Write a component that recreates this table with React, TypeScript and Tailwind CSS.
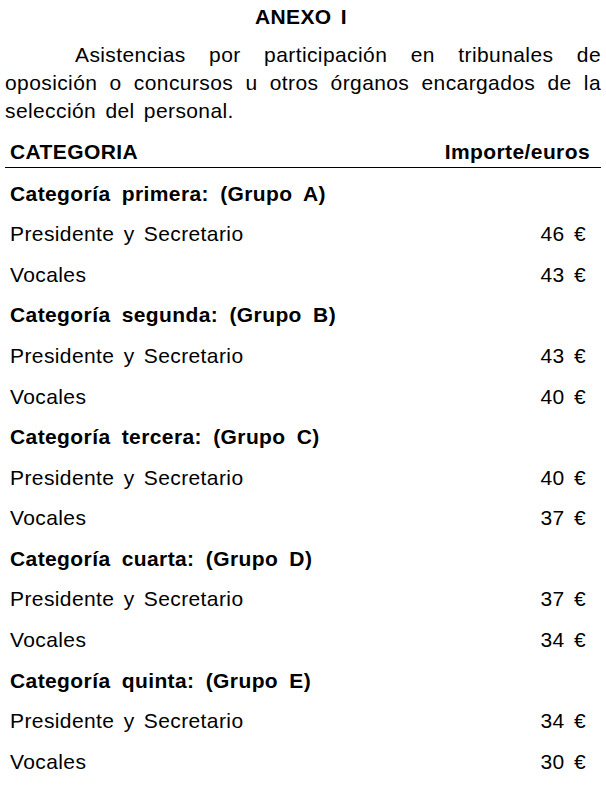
const rows: { group: string; pres: number; voc: number }[] = [
  { group: 'Categoría primera: (Grupo A)', pres: 46, voc: 43 },
  { group: 'Categoría segunda: (Grupo B)', pres: 43, voc: 40 },
  { group: 'Categoría tercera: (Grupo C)', pres: 40, voc: 37 },
  { group: 'Categoría cuarta: (Grupo D)', pres: 37, voc: 34 },
  { group: 'Categoría quinta: (Grupo E)', pres: 34, voc: 30 },
]

export default function App() {
  return (
    <div className="w-[606px] h-[786px] bg-white text-black font-['Liberation_Sans',Arial,sans-serif] text-[21px] tracking-[0.4px] [word-spacing:3px] px-[5px] pt-[5px]">
      <h1 className="text-center font-bold leading-[24px] pr-[4px]">ANEXO I</h1>
      <p className="mt-[12px] text-justify indent-[70px] leading-[28px]">
        Asistencias por participación en tribunales de oposición o concursos u otros órganos encargados de la selección del personal.
      </p>
      <div className="mt-[15px] flex justify-between items-end border-b border-black px-[5px] pb-[3px] font-bold leading-[24px]">
        <span>CATEGORIA</span>
        <span className="pr-[6px]">Importe/euros</span>
      </div>
      <div className="pt-[5px]">
        {rows.map((r) => (
          <div key={r.group}>
            <div className="h-[40.6px] flex items-center px-[5px] font-bold [word-spacing:5px]">{r.group}</div>
            <div className="h-[40.6px] flex items-center justify-between px-[5px]">
              <span>Presidente y Secretario</span>
              <span className="pr-[10px]">{r.pres} €</span>
            </div>
            <div className="h-[40.6px] flex items-center justify-between px-[5px]">
              <span>Vocales</span>
              <span className="pr-[10px]">{r.voc} €</span>
            </div>
          </div>
        ))}
      </div>
    </div>
  )
}
